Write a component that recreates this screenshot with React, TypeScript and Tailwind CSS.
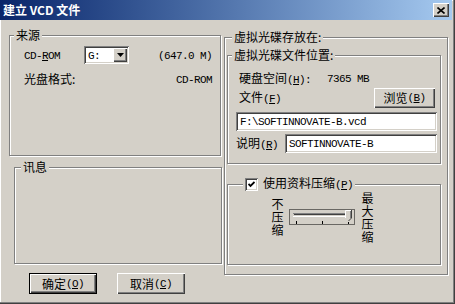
import React from 'react';

const etched = 'border border-[#808080] shadow-[inset_1px_1px_0_#fff,1px_1px_0_#fff]';
const raised = 'bg-[#d4d0c8] shadow-[inset_1px_1px_0_#fff,inset_-1px_-1px_0_#404040,inset_-2px_-2px_0_#808080]';
const sunken = 'bg-white shadow-[inset_1px_1px_0_#808080,inset_-1px_-1px_0_#fff,inset_2px_2px_0_#404040,inset_-2px_-2px_0_#d4d0c8]';

const Lat = ({ children }: { children: React.ReactNode }) => (
  <span className="font-['Liberation_Mono',monospace] text-[11px] tracking-[-0.6px]">{children}</span>
);

const Key = ({ k }: { k: string }) => (
  <Lat>
    (<u className="underline-offset-1">{k}</u>)
  </Lat>
);

const Combo = () => (
  <div className={`w-[45px] h-[18px] flex items-center p-[2px] ${sunken}`}>
    <span className="flex-1 pl-[2px] leading-[14px]">
      <Lat>G:</Lat>
    </span>
    <div className={`w-[14px] h-[14px] flex items-center justify-center ${raised}`}>
      <svg width="7" height="4" viewBox="0 0 7 4">
        <polygon points="0,0 7,0 3.5,4" fill="#000" />
      </svg>
    </div>
  </div>
);

// vertical caption beside the slider
const Vertical = ({ text }: { text: string }) => (
  <div className="[writing-mode:vertical-rl] w-[12px] leading-[12px] text-[12px] tracking-[1px]">{text}</div>
);

const Slider = () => (
  <svg width="66" height="16" viewBox="0 0 66 16">
    <rect x="0.5" y="0.5" width="65" height="15" fill="none" stroke="#000" strokeDasharray="1 1" />
    <line x1="4" y1="4.5" x2="62" y2="4.5" stroke="#808080" />
    <line x1="5" y1="5.5" x2="61" y2="5.5" stroke="#404040" />
    <line x1="4" y1="7.5" x2="62" y2="7.5" stroke="#fff" />
    <line x1="62.5" y1="4" x2="62.5" y2="8" stroke="#fff" />
    <polygon points="56,1 62,1 62,9 59,12 56,9" fill="#d4d0c8" />
    <polyline points="56.5,9 56.5,1.5 62,1.5" fill="none" stroke="#fff" />
    <polyline points="62.5,1 62.5,9 59.5,12" fill="none" stroke="#404040" />
    <line x1="61.5" y1="2" x2="61.5" y2="9" stroke="#808080" />
    <line x1="7.5" y1="12" x2="7.5" y2="15" stroke="#000" />
    <line x1="33.5" y1="12" x2="33.5" y2="15" stroke="#000" />
    <line x1="59.5" y1="13" x2="59.5" y2="15" stroke="#000" />
  </svg>
);

export default function App() {
  return (
    <div className="w-[455px] h-[304px] bg-[#d4d0c8] flex flex-col text-black text-[12px] leading-[14px] font-['Noto_Sans_CJK_SC',sans-serif] shadow-[inset_-1px_-1px_0_#404040,inset_-2px_-2px_0_#808080,inset_1px_1px_0_#fff]">
      <div className="h-[20px] mr-[3px] flex items-center justify-between pl-[3px] pr-[3px] bg-linear-to-r from-[#0a246a] to-[#a6caf0]">
        <span className="text-white font-bold text-[12px]">建立 VCD 文件</span>
        <div className={`w-[16px] h-[14px] flex items-center justify-center ${raised}`}>
          <svg width="8" height="7" viewBox="0 0 8 7">
            <path d="M0.5 0.5 L7.5 6.5 M7.5 0.5 L0.5 6.5" stroke="#000" strokeWidth="1.6" />
          </svg>
        </div>
      </div>

      <div className="flex pl-[9px] pt-[8px]">
        <div className="w-[213px] flex flex-col">
          <fieldset className={`h-[128px] w-[212px] ${etched}`}>
            <legend className="ml-[4px] px-[2px] leading-[14px] bg-[#d4d0c8]">来源</legend>
            <div className="mt-[4px] flex items-center h-[18px] pl-[14px] pr-[8px]">
              <span className="w-[60px]">
                <Lat>
                  CD-<u>R</u>OM
                </Lat>
              </span>
              <Combo />
              <span className="ml-auto">
                <Lat>(647.0 M)</Lat>
              </span>
            </div>
            <div className="mt-[8px] flex items-center h-[14px] pl-[14px] pr-[8px]">
              <span>光盘格式:</span>
              <span className="ml-auto">
                <Lat>CD-ROM</Lat>
              </span>
            </div>
          </fieldset>

          <fieldset className={`mt-[4px] ml-[5px] h-[104px] w-[208px] ${etched}`}>
            <legend className="ml-[6px] px-[2px] leading-[14px] bg-[#d4d0c8]">讯息</legend>
          </fieldset>

          <div className="mt-[9px] flex pl-[20px] gap-[20px]">
            <button className={`w-[68px] h-[21px] flex items-center justify-center border border-black ${raised}`}>
              确定<Key k="O" />
            </button>
            <button className={`w-[68px] h-[21px] flex items-center justify-center ${raised}`}>
              取消<Key k="C" />
            </button>
          </div>
        </div>

        <div className="ml-[2px] mt-[2px]">
          <fieldset className={`w-[224px] h-[245px] ${etched}`}>
            <legend className="ml-[7px] px-[2px] leading-[14px] bg-[#d4d0c8]">虚拟光碟存放在:</legend>

            <fieldset className={`mt-[4px] ml-[2px] w-[214px] h-[116px] ${etched}`}>
              <legend className="ml-[4px] px-[2px] leading-[14px] bg-[#d4d0c8]">虚拟光碟文件位置:</legend>
              <div className="mt-[10px] flex items-center h-[14px] pl-[11px]">
                <span className="w-[88px]">
                  硬盘空间<Key k="H" />
                  <Lat>:</Lat>
                </span>
                <Lat>7365 MB</Lat>
              </div>
              <div className="mt-[2px] flex items-center h-[20px] pl-[11px] pr-[5px]">
                <span>
                  文件<Key k="F" />
                </span>
                <button className={`ml-auto w-[61px] h-[20px] flex items-center justify-center ${raised}`}>
                  浏览<Key k="B" />
                </button>
              </div>
              <div className={`mt-[4px] ml-[8px] w-[201px] h-[19px] flex items-center pl-[4px] ${sunken}`}>
                <Lat>F:\SOFTINNOVATE-B.vcd</Lat>
              </div>
              <div className="mt-[3px] ml-[8px] flex items-center h-[19px]">
                <span className="w-[49px]">
                  说明<Key k="R" />
                </span>
                <div className={`w-[152px] h-[19px] flex items-center pl-[4px] ${sunken}`}>
                  <Lat>SOFTINNOVATE-B</Lat>
                </div>
              </div>
            </fieldset>

            <fieldset className={`mt-[12px] ml-[2px] w-[214px] h-[89px] ${etched}`}>
              <legend className="ml-[15px] px-[2px] leading-[14px] bg-[#d4d0c8]">
                <span className="flex items-center">
                  <span className={`w-[13px] h-[13px] flex items-center justify-center ${sunken}`}>
                    <svg width="7" height="7" viewBox="0 0 7 7">
                      <path d="M0.5 3 L2.5 5 L6.5 1" fill="none" stroke="#000" strokeWidth="1.8" />
                    </svg>
                  </span>
                  <span className="ml-[5px]">
                    使用资料压缩<Key k="P" />
                  </span>
                </span>
              </legend>
              <div className="flex items-start pl-[43px]">
                <div className="mt-[6px]">
                  <Vertical text="不压缩" />
                </div>
                <div className="ml-[6px] mt-[17px] flex">
                  <Slider />
                </div>
                <div className="ml-[6px]">
                  <Vertical text="最大压缩" />
                </div>
              </div>
            </fieldset>
          </fieldset>
        </div>
      </div>
    </div>
  );
}
